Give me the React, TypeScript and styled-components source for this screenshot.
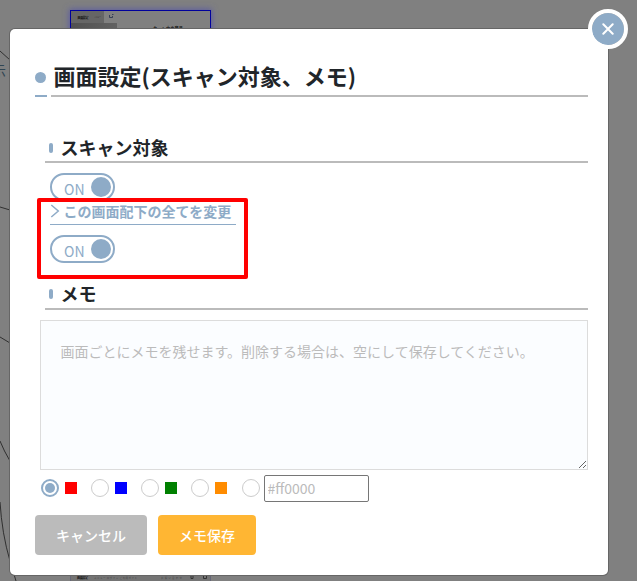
import React, { useState } from "react";
import styled, { createGlobalStyle } from "styled-components";

const BLUE = "#8eabc7";
const LINE = "#bbbbbb";

const GlobalStyle = createGlobalStyle`
  *, *::before, *::after { box-sizing: border-box; }
  html, body, #root { margin: 0; height: 100%; }
  body {
    overflow: hidden;
    background: #808080;
    color: #212529;
    font-family: "Noto Sans CJK JP", sans-serif;
    font-size: 14px;
  }
  button, input, textarea { font-family: inherit; margin: 0; }
`;

const Screen = styled.div`
  position: relative;
  width: 637px;
  height: 581px;
  padding: 29px 0 0 10px;
  overflow: hidden;
`;

const Canvas = styled.svg`
  position: absolute;
  inset: 0;
`;

const Dialog = styled.div`
  position: relative;
  display: flex;
  flex-direction: column;
  width: 598px;
  height: 546px;
  padding: 31px 20px 20px 25px;
  background: #fff;
  border-radius: 5px;
  box-shadow: 0 0 0 1px #666;
`;

const CloseButton = styled.button`
  position: absolute;
  top: -20px;
  right: -20px;
  display: flex;
  align-items: center;
  justify-content: center;
  width: 40px;
  height: 40px;
  padding: 0;
  border: 4px solid #fff;
  border-radius: 50%;
  background: ${BLUE};
  background-clip: padding-box;
`;

const Title = styled.h1`
  display: flex;
  align-items: center;
  height: 35px;
  margin: 0;
  font-size: 22px;
  font-weight: 700;
  line-height: 35px;
  white-space: nowrap;
`;

const TitleText = styled.span`
  padding-bottom: 4px;
  line-height: 31px;
`;

const Dot = styled.span`
  flex: none;
  width: 11px;
  height: 11px;
  margin-right: 7.5px;
  border-radius: 50%;
  background: ${BLUE};
`;

const TitleRule = styled.div`
  display: grid;
  grid-template-columns: 12px 1fr;
  gap: 4px;
  height: 2px;
`;

const Rule = styled.span<{ $color: string }>`
  background: ${(p) => p.$color};
`;

const Section = styled.section<{ $gap: number }>`
  display: flex;
  flex-direction: column;
  margin-top: ${(p) => p.$gap}px;
`;

const Heading = styled.h2<{ $lift?: number }>`
  display: flex;
  align-items: center;
  height: 29px;
  margin: 0 0 0 10px;
  padding: 0 0 ${(p) => 1 + (p.$lift ?? 0)}px 4px;
  border-bottom: 2px solid ${LINE};
  font-size: 18px;
  font-weight: 700;
  line-height: 26px;

  &::before {
    content: "";
    width: 4px;
    height: 10px;
    margin: 1px 7.5px 0 0;
    border-radius: 2px;
    background: ${BLUE};
  }
`;

const Switch = styled.button<{ $gap: number }>`
  display: flex;
  align-items: center;
  justify-content: space-between;
  width: 65px;
  height: 28px;
  margin: ${(p) => p.$gap}px 0 0 15px;
  padding: 0 2px 0 12px;
  border: 2px solid ${BLUE};
  border-radius: 14px;
  background: #fff;
  color: ${BLUE};
  font-size: 14px;
  line-height: 20px;
`;

const SwitchLabel = styled.span`
  padding-top: 4px;
`;

const Knob = styled.span`
  width: 20px;
  height: 20px;
  border-radius: 50%;
  background: ${BLUE};
`;

const AllLink = styled.a`
  display: flex;
  align-items: center;
  gap: 3.5px;
  width: 186px;
  height: 24px;
  margin-left: 15px;
  border-bottom: 1px solid ${BLUE};
  color: ${BLUE};
  font-weight: 700;
  line-height: 20px;
  white-space: nowrap;
  padding-bottom: 3px;
`;

const Memo = styled.textarea`
  display: block;
  width: 548px;
  height: 150px;
  margin: 10px 0 0 5px;
  padding: 20px 19.5px;
  border: 1px solid #dcdcdc;
  border-radius: 0;
  outline: none;
  background: #fbfdff;
  font-size: 14px;
  line-height: 21px;
  resize: both;

  &::placeholder { color: #bbb; }
`;

const ColorRow = styled.div`
  display: flex;
  align-items: center;
  height: 28px;
  margin: 4px 0 0 6px;
`;

const ColorChoice = styled.label<{ $width: number }>`
  display: flex;
  align-items: center;
  gap: 6px;
  width: ${(p) => p.$width}px;
`;

const Radio = styled.input`
  appearance: none;
  display: grid;
  place-items: center;
  width: 18px;
  height: 18px;
  border: 1px solid #ccc;
  border-radius: 50%;
  background: #fff;

  &:checked { border: 2px solid ${BLUE}; }
  &:checked::before {
    content: "";
    width: 10px;
    height: 10px;
    border-radius: 50%;
    background: ${BLUE};
  }
`;

const Swatch = styled.span<{ $color: string }>`
  width: 12px;
  height: 12px;
  background: ${(p) => p.$color};
`;

const HexInput = styled.input`
  width: 105px;
  height: 27px;
  padding: 2px 2.5px;
  border: 1px solid #767676;
  border-radius: 2px;
  outline: none;
  font-size: 14px;

  &::placeholder { color: #bbb; }
`;

const Actions = styled.div`
  display: flex;
  gap: 11px;
  margin-top: 13px;
`;

const ActionButton = styled.button<{ $color: string; $width: number }>`
  width: ${(p) => p.$width}px;
  height: 40px;
  padding: 0 0 1px;
  border: 0;
  border-radius: 4px;
  background: ${(p) => p.$color};
  color: #fff;
  font-size: 14px;
  font-weight: 500;
`;

const Highlight = styled.div`
  position: absolute;
  left: 37px;
  top: 198px;
  width: 211px;
  height: 81px;
  border: 4px solid #f00;
  border-radius: 2px;
  pointer-events: none;
`;

const COLORS = [
  { value: "#ff0000", width: 50 },
  { value: "#0000ff", width: 50 },
  { value: "#008000", width: 50 },
  { value: "#ff8c00", width: 51 },
];

function Backdrop() {
  return (
    <Canvas width="637" height="581" viewBox="0 0 637 581">
      <defs>
        <filter id="glow" x="-10%" y="-60%" width="120%" height="220%">
          <feGaussianBlur stdDeviation="3" />
        </filter>
        <linearGradient id="hero" x1="0" x2="1">
          <stop offset="0" stopColor="#505050" />
          <stop offset="1" stopColor="#626262" />
        </linearGradient>
      </defs>
      <rect x="69" y="9" width="143" height="50" fill="#5c5ca0" filter="url(#glow)" />
      <rect x="70.5" y="10.5" width="140" height="40" fill="#808080" stroke="#00009c" />
      <path d="M71 11h33v12h13v10H71z" fill="url(#hero)" />
      <path d="M71 11h33v12H71z" fill="#666" />
      <text x="77.5" y="18.5" fontSize="3" textLength="11" fontWeight="700" fill="#111">画面設定</text>
      <text x="94" y="18" fontSize="2" textLength="7" fill="#333">メニュー</text>
      <path d="M109.500 15v2.500h3V16M112 14.500h1.500" fill="none" stroke="#25304c" strokeWidth=".8" />
      <text x="153" y="30" fontSize="4.200" textLength="30" fontWeight="700" fill="#111">カート内の商品</text>
      <g fill="none" stroke="#303030" strokeWidth="1">
        <path d="M0 51L10 60" />
        <path d="M0 207L10 210" />
        <path d="M0 337L10 343" />
        <path d="M0 441Q4 451 10 461" />
        <path d="M0 502Q2 534 10 561L16 581" />
      </g>
      <text x="-8" y="76" fontSize="14" fill="#304552">示</text>
      <path d="M70 574h141v7H70z" fill="#747474" />
      <path d="M70.500 574v7M210.500 574v7" stroke="#666677" />
      <text x="77" y="579" fontSize="3" textLength="11" fontWeight="700" fill="#111">画面設定</text>
      <text x="94" y="578.500" fontSize="2.500" textLength="43" fill="#444">メニュー ログイン ご利用ガイド</text>
      <text x="161" y="578.500" fontSize="2.500" textLength="21" fill="#444">お問い合わせ</text>
      <path d="M191 575.500h2v3h-2zM203.500 575.500h3v3h-3z" fill="none" stroke="#333" />
    </Canvas>
  );
}

export default function App() {
  const [color, setColor] = useState("#ff0000");

  return (
    <Screen>
      <GlobalStyle />
      <Backdrop />
      <Dialog role="dialog">
        <CloseButton aria-label="閉じる">
          <svg width="12" height="12" viewBox="0 0 12 12" fill="none" stroke="#fff" strokeWidth="2" strokeLinecap="round">
            <path d="M1.300 1.300l9.400 9.400M10.700 1.300L1.300 10.700" />
          </svg>
        </CloseButton>
        <Title><Dot /><TitleText>画面設定(スキャン対象、メモ)</TitleText></Title>
        <TitleRule>
          <Rule $color={BLUE} />
          <Rule $color={LINE} />
        </TitleRule>

        <Section $gap={37}>
          <Heading>スキャン対象</Heading>
          <Switch $gap={10}><SwitchLabel>ON</SwitchLabel><Knob /></Switch>
          <AllLink>
            <svg width="10" height="14" viewBox="0 0 10 14" fill="none" stroke={BLUE} strokeWidth="1.500">
              <path d="M1.300 1l7 6-7 6" />
            </svg>
            この画面配下の全てを変更
          </AllLink>
          <Switch $gap={10}><SwitchLabel>ON</SwitchLabel><Knob /></Switch>
        </Section>

        <Section $gap={18}>
          <Heading $lift={2}>メモ</Heading>
          <Memo placeholder="画面ごとにメモを残せます。削除する場合は、空にして保存してください。" />
          <ColorRow>
            {COLORS.map((c) => (
              <ColorChoice key={c.value} $width={c.width}>
                <Radio type="radio" name="color" checked={color === c.value} onChange={() => setColor(c.value)} />
                <Swatch $color={c.value} />
              </ColorChoice>
            ))}
            <ColorChoice $width={22}>
              <Radio type="radio" name="color" checked={color === "custom"} onChange={() => setColor("custom")} />
            </ColorChoice>
            <HexInput placeholder="#ff0000" />
          </ColorRow>
        </Section>

        <Actions>
          <ActionButton $color="#bbbbbb" $width={112}>キャンセル</ActionButton>
          <ActionButton $color="#ffb633" $width={98}>メモ保存</ActionButton>
        </Actions>
      </Dialog>
      <Highlight />
    </Screen>
  );
}
